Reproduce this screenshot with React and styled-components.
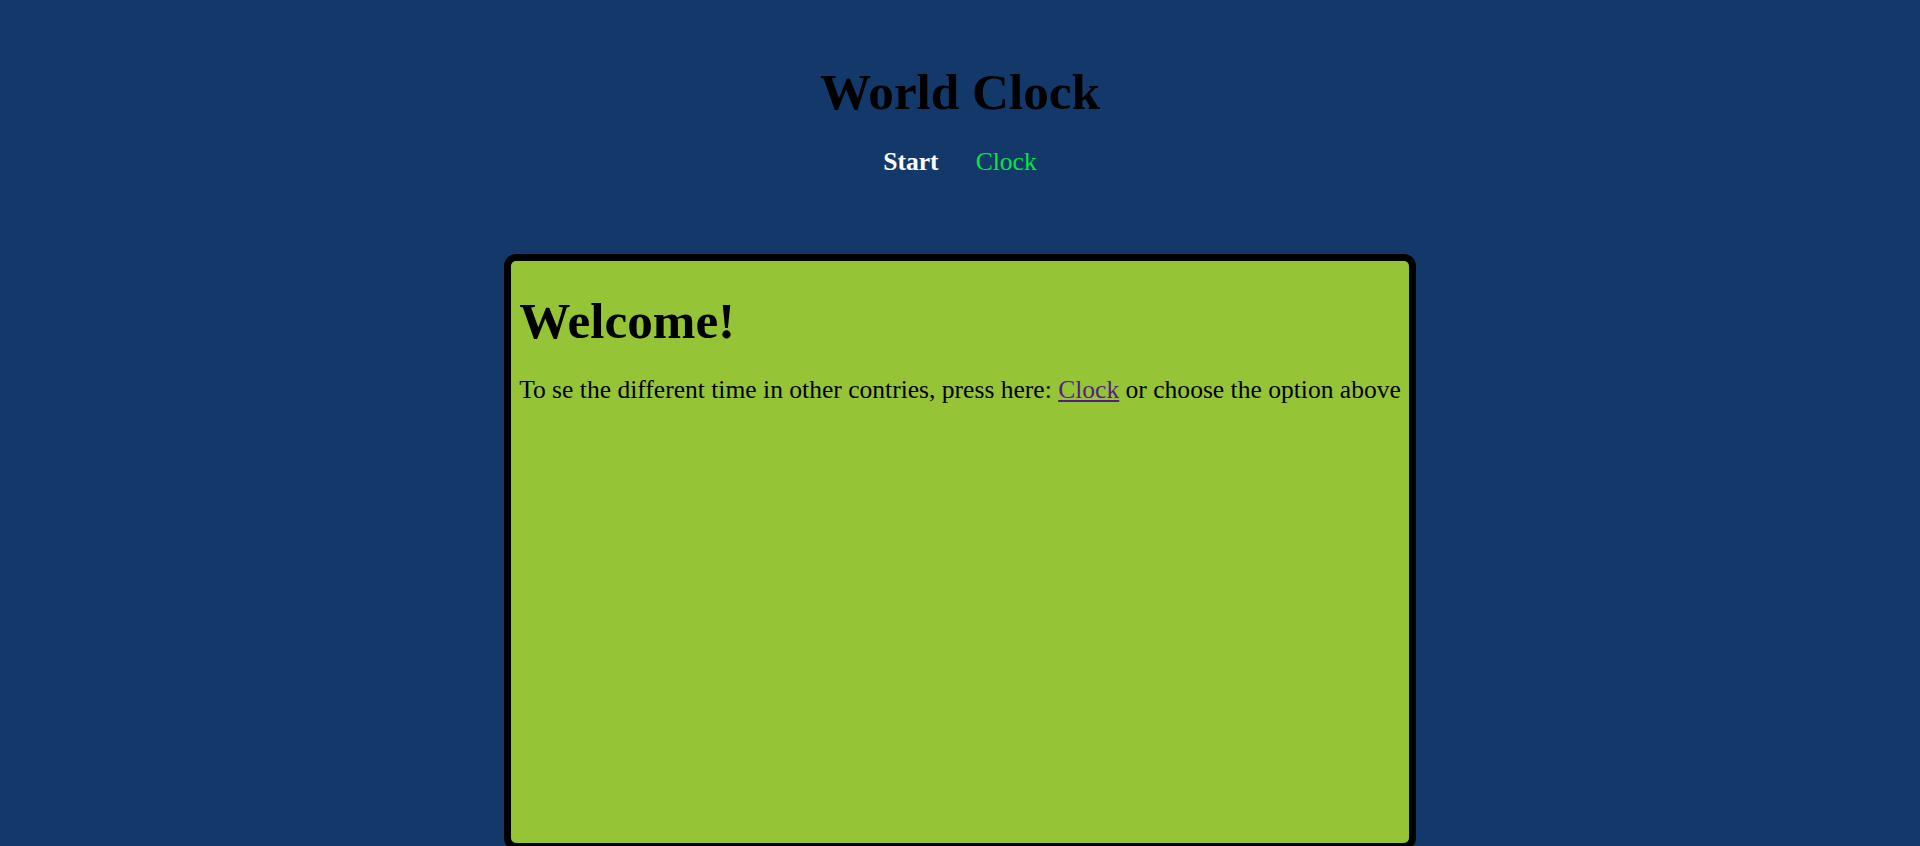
import React from "react";
import styled, { createGlobalStyle } from "styled-components";

const Global = createGlobalStyle`
  html, body { margin: 0; padding: 0; }
  body {
    background: #12396a;
    font-family: "Liberation Serif", "Times New Roman", serif;
    color: #000;
  }
`;

const Page = styled.div`
  display: flex;
  flex-direction: column;
  align-items: center;
  padding-top: 62px;
`;

const Title = styled.h1`
  margin: 0;
  font-size: 51.2px;
  font-weight: bold;
  line-height: normal;
`;

const Nav = styled.nav`
  display: flex;
  gap: 37px;
  margin-top: 26px;
`;

const NavLink = styled.a`
  font-size: 25.6px;
  line-height: normal;
  text-decoration: none;
  cursor: pointer;
  color: ${(p) => (p.$active ? "#ffffff" : "#0be244")};
  font-weight: ${(p) => (p.$active ? "bold" : "normal")};
`;

const Card = styled.main`
  margin-top: 77px;
  width: fit-content;
  min-height: 566px;
  padding: 8px;
  background: #95c536;
  border: 7px solid #000;
  border-radius: 12px;
`;

const Heading = styled.h2`
  margin: 22px 0 25px;
  font-size: 51.2px;
  font-weight: bold;
  line-height: normal;
`;

const Text = styled.p`
  margin: 0;
  font-size: 25.55px;
  line-height: normal;
  white-space: nowrap;
`;

const InlineLink = styled.a`
  color: #551a8b;
  text-decoration: underline;
`;

export default function App() {
  return (
    <>
      <Global />
      <Page>
        <Title>World Clock</Title>
        <Nav>
          <NavLink $active>Start</NavLink>
          <NavLink>Clock</NavLink>
        </Nav>
        <Card>
          <Heading>Welcome!</Heading>
          <Text>
            To se the different time in other contries, press here:{" "}
            <InlineLink href="#">Clock</InlineLink> or choose the option above
          </Text>
        </Card>
      </Page>
    </>
  );
}
